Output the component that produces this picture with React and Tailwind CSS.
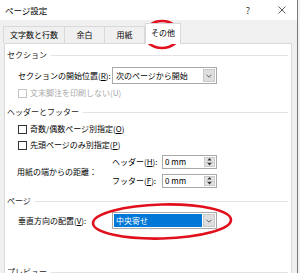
import React from 'react';

const Chevron = () => (
  <svg width="6" height="4" viewBox="0 0 6 4" fill="none" stroke="#555" strokeWidth="0.9">
    <path d="M0.5 0.7 L3 3.2 L5.5 0.7" />
  </svg>
);

const Section = ({ label, className = '' }) => (
  <div className={`flex items-center h-[12px] pr-[3px] ${className}`}>
    <span className="text-[#1a1a1a]">{label}</span>
    <div className="flex-1 h-px bg-[#e3e3e3] ml-[4px]" />
  </div>
);

const Check = ({ disabled, children, className = '' }) => (
  <div className={`flex items-center h-[12px] ml-[11px] ${className}`}>
    <div className={`w-[9px] h-[9px] border bg-white ${disabled ? 'border-[#c4c4c4]' : 'border-[#333]'}`} />
    <span className={`ml-[3px] ${disabled ? 'text-[#a8a8a8]' : 'text-black'}`}>{children}</span>
  </div>
);

const Combo = ({ children, selected }) => (
  <div className="w-[105px] h-[17px] border border-[#a9a9a9] bg-white flex items-stretch p-px">
    {selected ? (
      <div className="flex-1 bg-[#0078d7] text-white flex items-center pl-[2px]">{children}</div>
    ) : (
      <div className="flex-1 flex items-center pl-[2px]">{children}</div>
    )}
    <div className="w-[12px] ml-px bg-[#dedede] border border-[#c9c9c9] flex items-center justify-center">
      <Chevron />
    </div>
  </div>
);

const Spin = () => (
  <div className="w-[55px] h-[14px] border border-[#a9a9a9] bg-white flex items-stretch p-px">
    <div className="flex-1 flex items-center pl-px">0 mm</div>
    <div className="w-[11px] bg-[#e3e3e3] border border-[#c9c9c9] flex flex-col items-center justify-center gap-px">
      <svg width="5" height="3" viewBox="0 0 5 3"><path d="M0 3 L2.5 0 L5 3 Z" fill="#333" /></svg>
      <div className="w-[7px] h-px bg-[#b5b5b5]" />
      <svg width="5" height="3" viewBox="0 0 5 3"><path d="M0 0 L2.5 3 L5 0 Z" fill="#333" /></svg>
    </div>
  </div>
);

const U = ({ children }) => <span className="underline underline-offset-1">{children}</span>;

export default function App() {
  return (
    <div className="relative w-[300px] h-[273px] overflow-hidden bg-[#f0f0f0] flex font-['Noto_Sans_CJK_JP',sans-serif] text-[8px] leading-none text-black">
      <div className="w-[297px] flex flex-col">
        {/* title bar */}
        <div className="h-[20px] bg-white flex items-center pl-[5px] shrink-0">
          <span className="text-[8.5px]">ページ設定</span>
          <span className="ml-auto w-[8px] text-center text-[9px] text-[#333]">?</span>
          <div className="ml-[26px] mr-[11px] w-[8px] flex justify-center">
            <svg width="8" height="8" viewBox="0 0 8 8" stroke="#333" strokeWidth="0.8">
              <path d="M0.5 0.5 L7.5 7.5 M7.5 0.5 L0.5 7.5" />
            </svg>
          </div>
        </div>

        {/* tabs */}
        <div className="mt-[3px] h-[20px] flex items-end pl-[3px] shrink-0 relative z-10">
          <div className="h-[17px] w-[62px] border border-b-0 border-[#d9d9d9] bg-[#f0f0f0] flex items-center justify-center">文字数と行数</div>
          <div className="h-[17px] w-[40px] border border-b-0 border-l-0 border-[#d9d9d9] bg-[#f0f0f0] flex items-center justify-center">余白</div>
          <div className="h-[17px] w-[40px] border border-b-0 border-l-0 border-[#d9d9d9] bg-[#f0f0f0] flex items-center justify-center">用紙</div>
          <div className="h-[21px] w-[36px] -mb-px border border-b-0 border-[#d9d9d9] bg-white flex items-center justify-center pb-[2px]">その他</div>
        </div>

        {/* panel */}
        <div className="ml-[4px] w-[288px] flex-1 bg-white border border-b-0 border-[#d9d9d9] flex flex-col pl-[2px]">
          <Section label="セクション" className="mt-[5px]" />
          <div className="mt-[6px] h-[17px] flex items-center ml-[11px]">
            <span className="w-[94px]">セクションの開始位置(<U>R</U>):</span>
            <Combo>次のページから開始</Combo>
          </div>
          <Check disabled className="mt-[3px]">文末脚注を印刷しない(U)</Check>
          <Section label="ヘッダーとフッター" className="mt-[7px]" />
          <Check className="mt-[5px]">奇数/偶数ページ別指定(<U>O</U>)</Check>
          <Check className="mt-[4px]">先頭ページのみ別指定(<U>P</U>)</Check>
          <div className="mt-[4px] flex items-center ml-[10px]">
            <span className="w-[95px]">用紙の端からの距離：</span>
            <div className="flex flex-col gap-[5px]">
              <div className="flex items-center h-[14px]">
                <span className="w-[50px]">ヘッダー(<U>H</U>):</span>
                <Spin />
              </div>
              <div className="flex items-center h-[14px]">
                <span className="w-[50px]">フッター(<U>F</U>):</span>
                <Spin />
              </div>
            </div>
          </div>
          <Section label="ページ" className="mt-[7px]" />
          <div className="mt-[5px] h-[17px] flex items-center ml-[11px]">
            <span className="w-[94px]">垂直方向の配置(<U>V</U>):</span>
            <Combo selected>中央寄せ</Combo>
          </div>
          <Section label="プレビュー" className="mt-[37px]" />
        </div>
      </div>
      <div className="w-px bg-[#7a7a7a]" />
      <div className="w-[2px] bg-[#f3f3f3]" />

      {/* red annotation marks */}
      <svg className="absolute left-0 top-0 pointer-events-none" width="300" height="273" viewBox="0 0 300 273" fill="none" stroke="#e0101c" strokeWidth="2.6">
        <ellipse cx="162" cy="34.5" rx="17.5" ry="13.5" />
        <ellipse cx="162" cy="221.5" rx="69" ry="17" transform="rotate(-1.5 162 221.5)" />
      </svg>
    </div>
  );
}
